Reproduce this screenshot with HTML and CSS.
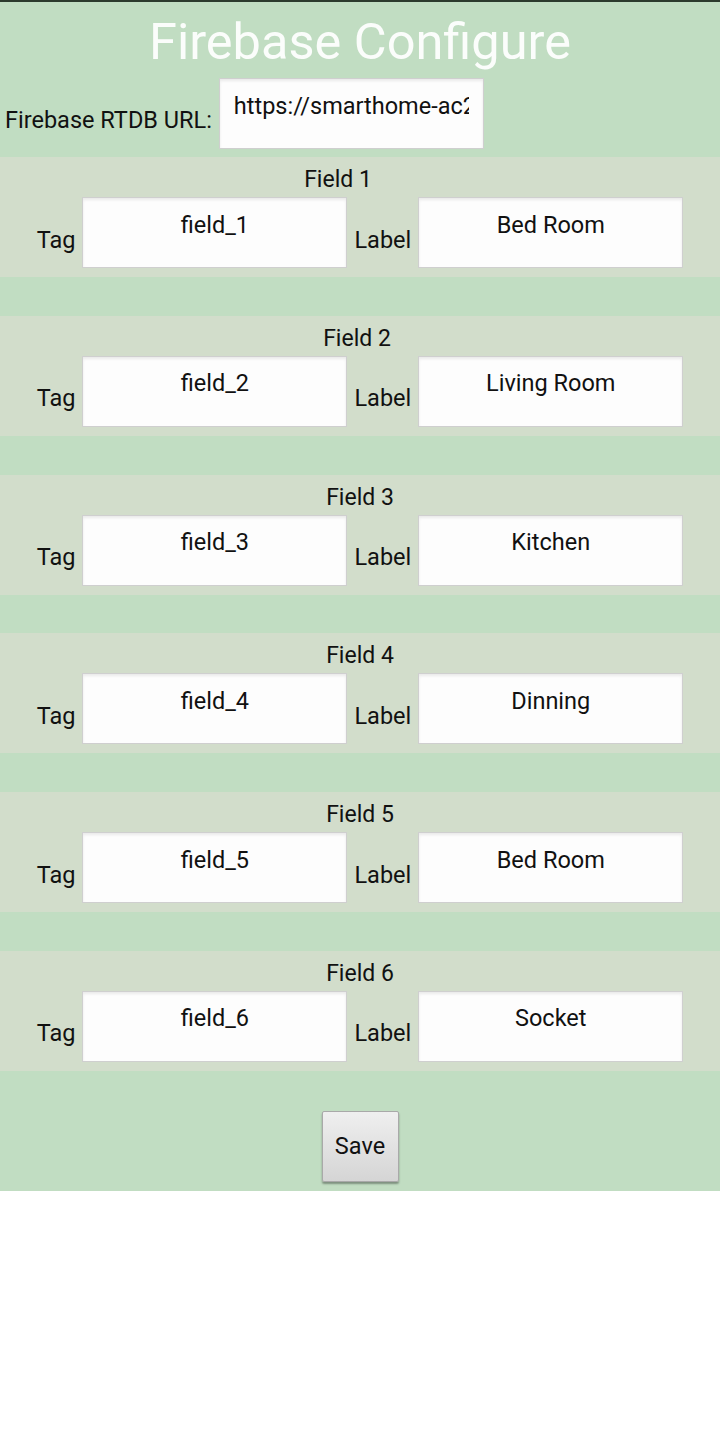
FILE: index.html
```html
<!DOCTYPE html>
<html lang="en">
<head>
<meta charset="utf-8">
<title>Firebase Configure</title>
<link rel="stylesheet" href="styles.css">
</head>
<body>
<div class="page">
  <header class="header">
    <h1 class="title">Firebase Configure</h1>
    <div class="url-row">
      <label class="url-label" for="url">Firebase RTDB URL:</label>
      <input class="box url-input" id="url" type="text" value="https://smarthome-ac2b3-default-rtdb.firebaseio.com/">
    </div>
  </header>

  <div class="fields">
    <section class="field">
      <div class="field-title shift-1">Field 1</div>
      <div class="field-row">
        <span class="lbl">Tag</span>
        <input class="box center" type="text" value="field_1">
        <span class="lbl">Label</span>
        <input class="box center" type="text" value="Bed Room">
      </div>
    </section>

    <section class="field">
      <div class="field-title shift-2">Field 2</div>
      <div class="field-row">
        <span class="lbl">Tag</span>
        <input class="box center" type="text" value="field_2">
        <span class="lbl">Label</span>
        <input class="box center" type="text" value="Living Room">
      </div>
    </section>

    <section class="field">
      <div class="field-title">Field 3</div>
      <div class="field-row">
        <span class="lbl">Tag</span>
        <input class="box center" type="text" value="field_3">
        <span class="lbl">Label</span>
        <input class="box center" type="text" value="Kitchen">
      </div>
    </section>

    <section class="field">
      <div class="field-title">Field 4</div>
      <div class="field-row">
        <span class="lbl">Tag</span>
        <input class="box center" type="text" value="field_4">
        <span class="lbl">Label</span>
        <input class="box center" type="text" value="Dinning">
      </div>
    </section>

    <section class="field">
      <div class="field-title">Field 5</div>
      <div class="field-row">
        <span class="lbl">Tag</span>
        <input class="box center" type="text" value="field_5">
        <span class="lbl">Label</span>
        <input class="box center" type="text" value="Bed Room">
      </div>
    </section>

    <section class="field">
      <div class="field-title">Field 6</div>
      <div class="field-row">
        <span class="lbl">Tag</span>
        <input class="box center" type="text" value="field_6">
        <span class="lbl">Label</span>
        <input class="box center" type="text" value="Socket">
      </div>
    </section>
  </div>

  <div class="actions">
    <button class="save" type="button">Save</button>
  </div>
</div>
</body>
</html>
```

FILE: styles.css
```css
* {
  box-sizing: border-box;
}

html, body {
  margin: 0;
  padding: 0;
  background: #ffffff;
}

body {
  font-family: Roboto, "Noto Sans", "Liberation Sans", sans-serif;
  color: #111111;
}

.page {
  background: #c1ddc2;
  border-top: 2px solid #2c3a2d;
  display: flex;
  flex-direction: column;
}

.header {
  padding: 4px 0 8px;
}

.title {
  margin: 0;
  font-size: 50.5px;
  font-weight: 400;
  line-height: 72px;
  text-align: center;
  color: #fbfdfb;
}

.url-row {
  display: flex;
  align-items: center;
  gap: 7px;
  padding-left: 5px;
}

.url-label {
  font-size: 23.5px;
  padding-top: 12px;
  color: #111111;
}

.box {
  display: block;
  height: 71px;
  width: 265px;
  margin: 0;
  padding: 14px 14px 30px;
  border: 1px solid #cfcfcf;
  border-radius: 0;
  background: #fdfdfd;
  box-shadow: inset 0 2px 3px rgba(0, 0, 0, 0.08);
  font-family: Roboto, "Noto Sans", "Liberation Sans", sans-serif;
  font-size: 23.5px;
  color: #111111;
  outline: none;
}

.url-input {
  text-align: left;
}

.center {
  text-align: center;
}

.fields {
  display: flex;
  flex-direction: column;
  gap: 38.8px;
}

.field {
  background: #d2ddcb;
  padding: 7px 0 9px;
}

.field-title {
  font-size: 23px;
  line-height: 31px;
  text-align: center;
  margin-bottom: 2px;
}

.shift-1 {
  padding-right: 44px;
}

.shift-2 {
  padding-right: 6px;
}

.field-row {
  display: flex;
  justify-content: center;
  align-items: center;
  gap: 7px;
}

.lbl {
  font-size: 23.5px;
  padding-top: 14px;
}

.actions {
  display: flex;
  justify-content: center;
  padding: 40px 0 9px;
}

.save {
  width: 77px;
  height: 71px;
  padding: 0;
  border: 1px solid #a9a9a9;
  border-radius: 2px;
  background: linear-gradient(to bottom, #efefef, #d5d5d5);
  box-shadow: 0 2px 2px rgba(0, 0, 0, 0.35);
  font-family: Roboto, "Noto Sans", "Liberation Sans", sans-serif;
  font-size: 23.5px;
  color: #111111;
}
```
